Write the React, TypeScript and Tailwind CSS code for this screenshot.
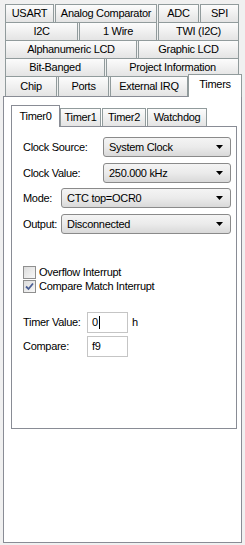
import React from 'react';

const font = "font-['Liberation_Sans',Arial,sans-serif] text-[11px] tracking-[-0.3px] text-black";

function Tab({ label, className }: { label: string; className: string }) {
  return (
    <div
      className={`flex items-center justify-center border border-[#919b9c] bg-gradient-to-b from-[#fcfcfc] to-[#e4e4e4] leading-none ${className}`}
    >
      {label}
    </div>
  );
}

function Select({ value, className }: { value: string; className: string }) {
  return (
    <div
      className={`flex h-[20px] items-center justify-between rounded-[3px] border border-[#8a8a8a] bg-gradient-to-b from-[#f4f4f4] via-[#ebebeb] to-[#d9d9d9] pl-[5px] pr-[7px] ${className}`}
    >
      <span>{value}</span>
      <svg width="7" height="4" viewBox="0 0 7 4">
        <path d="M0 0H7L3.5 4Z" fill="#000" />
      </svg>
    </div>
  );
}

function Checkbox({ label, checked }: { label: string; checked?: boolean }) {
  return (
    <div className="flex h-[14px] items-center">
      <div className="relative h-[13px] w-[13px] border border-[#8f8f8f] bg-gradient-to-br from-[#dcdcdc] to-[#f8f8f8]">
        {checked && (
          <svg className="absolute left-[1px] top-[1px]" width="9" height="9" viewBox="0 0 9 9">
            <path d="M1 4.5L3.5 7L8 1.5" fill="none" stroke="#4b5f95" strokeWidth="1.8" />
          </svg>
        )}
      </div>
      <span className="ml-[3px]">{label}</span>
    </div>
  );
}

export default function App() {
  return (
    <div className={`h-[545px] w-[245px] bg-[#f0f0f0] pt-[4px] ${font}`}>
      {/* top tab rows */}
      <div className="flex gap-px pl-[5px]">
        <Tab label="USART" className="h-[19px] w-[49px]" />
        <Tab label="Analog Comparator" className="h-[19px] w-[102px]" />
        <Tab label="ADC" className="h-[19px] w-[41px]" />
        <Tab label="SPI" className="h-[19px] w-[39px]" />
      </div>
      <div className="-mt-px flex gap-px pl-[5px]">
        <Tab label="I2C" className="h-[19px] w-[73px]" />
        <Tab label="1 Wire" className="h-[19px] w-[78px]" />
        <Tab label="TWI (I2C)" className="h-[19px] w-[81px]" />
      </div>
      <div className="-mt-px flex gap-px pl-[5px]">
        <Tab label="Alphanumeric LCD" className="h-[19px] w-[132px]" />
        <Tab label="Graphic LCD" className="h-[19px] w-[101px]" />
      </div>
      <div className="-mt-px flex gap-px pl-[5px]">
        <Tab label="Bit-Banged" className="h-[19px] w-[100px]" />
        <Tab label="Project Information" className="h-[19px] w-[133px]" />
      </div>
      <div className="-mt-[3px] flex h-[22px] items-end pl-[5px]">
        <Tab label="Chip" className="h-[20px] w-[52px] border-b-0" />
        <Tab label="Ports" className="ml-px h-[20px] w-[51px] border-b-0" />
        <Tab label="External IRQ" className="ml-px h-[20px] w-[78px] border-b-0" />
        <div className="relative z-10 -mb-px flex h-[23px] w-[54px] items-start justify-center border border-b-0 border-[#919b9c] bg-white pt-[4px] leading-none">
          Timers
        </div>
      </div>

      {/* main panel */}
      <div className="ml-[3px] h-[447px] w-[239px] border border-[#898c95] bg-white pl-[7px] pt-[8px]">
        <div className="flex h-[21px] items-end">
          <div className="relative z-10 -mb-px flex h-[22px] w-[49px] items-start justify-center border border-b-0 border-[#898c95] bg-white pt-[5px] leading-none">
            Timer0
          </div>
          <Tab label="Timer1" className="h-[18px] w-[41px] border-b-0 from-[#f4f4f4] to-[#d8d8d8]" />
          <Tab label="Timer2" className="ml-px h-[18px] w-[44px] border-b-0 from-[#f4f4f4] to-[#d8d8d8]" />
          <Tab label="Watchdog" className="ml-px h-[18px] w-[60px] border-b-0 from-[#f4f4f4] to-[#d8d8d8]" />
        </div>

        <div className="h-[303px] w-[226px] border border-[#898c95] bg-white pl-[11px] pr-[5px] pt-[10px]">
          <div className="flex items-center justify-between">
            <span>Clock Source:</span>
            <Select value="System Clock" className="w-[128px]" />
          </div>
          <div className="mt-[6px] flex items-center justify-between">
            <span>Clock Value:</span>
            <Select value="250.000 kHz" className="w-[128px]" />
          </div>
          <div className="mt-[5px] flex items-center justify-between">
            <span>Mode:</span>
            <Select value="CTC top=OCR0" className="w-[170px]" />
          </div>
          <div className="mt-[6px] flex items-center justify-between">
            <span>Output:</span>
            <Select value="Disconnected" className="w-[170px]" />
          </div>

          <div className="mt-[31px]">
            <Checkbox label="Overflow Interrupt" />
            <Checkbox label="Compare Match Interrupt" checked />
          </div>

          <div className="mt-[19px] flex items-center">
            <span className="w-[64px]">Timer Value:</span>
            <div className="flex h-[21px] w-[41px] items-center border border-[#c5c5c5] pl-[4px]">
              0<span className="ml-px h-[13px] w-px bg-black" />
            </div>
            <span className="ml-[4px]">h</span>
          </div>
          <div className="mt-[3px] flex items-center">
            <span className="w-[64px]">Compare:</span>
            <div className="flex h-[21px] w-[41px] items-center border border-[#c5c5c5] pl-[4px]">f9</div>
          </div>
        </div>
      </div>
    </div>
  );
}
